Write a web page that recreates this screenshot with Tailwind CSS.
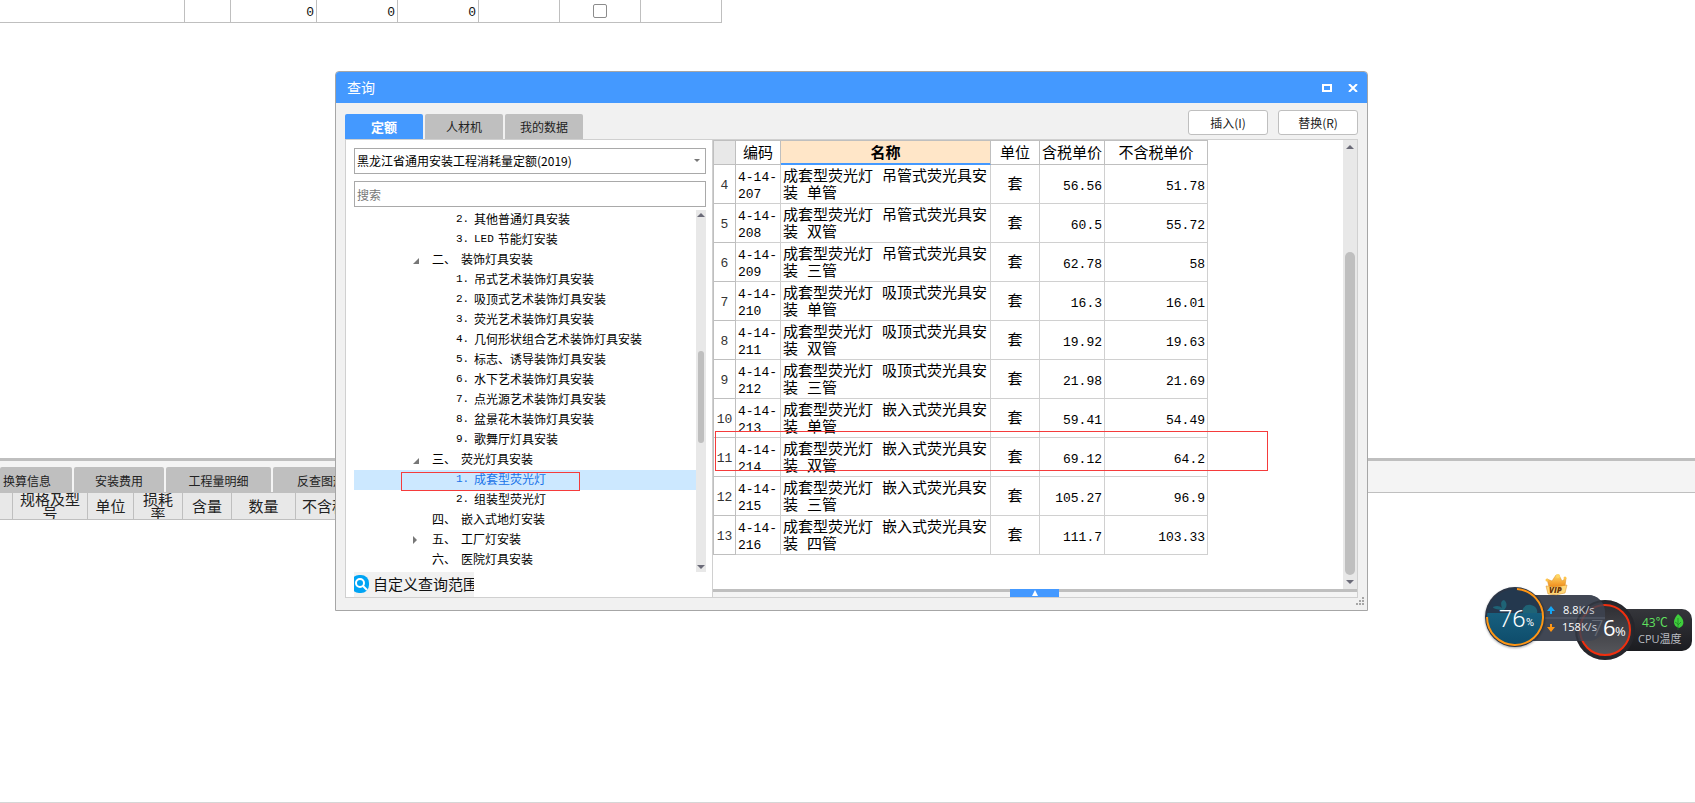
<!DOCTYPE html>
<html lang="zh-CN">
<head>
<meta charset="utf-8">
<title>查询</title>
<script src="https://cdn.jsdelivr.net/npm/@tailwindcss/browser@4"></script>
</head>
<body class="relative flex min-h-screen flex-col overflow-hidden border-b border-[#d6d6d6] bg-white font-['Noto_Sans_CJK_SC',sans-serif] text-[#111]">

<!-- Main sheet -->
<div class="h-[458px] shrink-0">
  <table class="w-[722px] table-fixed border-separate border-spacing-0 text-right font-['Liberation_Mono',monospace] text-[13px] leading-4 [&_td]:h-[23px] [&_td]:border-r [&_td]:border-b [&_td]:border-[#bfbfbf] [&_td]:p-0 [&_td]:pt-1 [&_td]:pr-[2px]">
    <colgroup><col class="w-[185px]"><col class="w-[46px]"><col class="w-[86px]"><col class="w-[81px]"><col class="w-[81px]"><col class="w-[81px]"><col class="w-[81px]"><col class="w-[81px]"></colgroup>
    <tr><td></td><td></td><td>0</td><td>0</td><td>0</td><td></td>
      <td class="!p-0"><input type="checkbox" aria-label="选择" class="mx-auto block size-[14px] appearance-none rounded-[2px] border border-[#8c8c8c] bg-white"></td><td></td></tr>
  </table>
</div>

<!-- Detail pane -->
<section class="flex flex-1 flex-col">
  <div class="flex h-[35px] items-end gap-[2px] border-t-3 border-b border-t-[#bfbfbf] border-b-[#bfbfbf] bg-[#f4f4f4] text-xs text-[#222] *:h-[25px] *:rounded-t-[2px] *:bg-[#bfbfbf] *:pt-[2px]">
    <button class="w-[72px] pr-[21px] text-right whitespace-nowrap">换算信息</button>
    <button class="w-[90px]">安装费用</button>
    <button class="w-[105px]">工程量明细</button>
    <button class="w-[132px]">反查图形工程量</button>
  </div>
  <div class="flex h-[27px] text-center text-[15px] leading-[14px] text-[#222] *:flex *:items-center *:justify-center *:overflow-hidden *:border-r *:border-b *:border-[#bfbfbf] *:bg-[#e8e8e8]">
    <div class="w-[13px]"></div>
    <div class="w-[75px] px-[6px]">规格及型号</div>
    <div class="w-[46px]">单位</div>
    <div class="w-[49px] px-2">损耗率</div>
    <div class="w-[49px]">含量</div>
    <div class="w-[64px]">数量</div>
    <div class="w-[88px]">不含税单价</div>
  </div>
</section>

<!-- Query window -->
<main class="absolute top-[71px] left-[335px] flex h-[540px] w-[1033px] flex-col rounded-t border border-[#a6a6a6] bg-[#f1f1f1]">
  <header class="flex h-[31px] shrink-0 items-center rounded-t-[3px] bg-[#4499ff] pr-[9px] pl-[11px] text-white">
    <h1 class="flex-1 pb-[2px] text-sm">查询</h1>
    <button aria-label="最大化" class="mr-4"><svg width="10" height="8"><rect x="1" y="1" width="8" height="6" fill="none" stroke="#fff" stroke-width="2"/></svg></button>
    <button aria-label="关闭"><svg width="10" height="8"><path d="M1 0L9 8M9 0L1 8" stroke="#fff" stroke-width="2"/></svg></button>
  </header>

  <div class="flex h-9 shrink-0 items-end px-[9px] text-xs">
    <div class="flex flex-1 gap-[2px] *:h-[25px] *:w-[78px] *:rounded-t-[2px]">
      <button class="bg-[#4499ff] text-[13px] font-bold text-white">定额</button>
      <button class="bg-[#bfbfbf] text-[#222]">人材机</button>
      <button class="bg-[#bfbfbf] text-[#222]">我的数据</button>
    </div>
    <div class="mb-1 flex gap-[10px]">
      <button class="h-[25px] w-20 rounded-[3px] border border-[#bfbfbf] bg-white text-[#222]">插入(I)</button>
      <button class="h-[25px] w-20 rounded-[3px] border border-[#bfbfbf] bg-white text-[#222]">替换(R)</button>
    </div>
  </div>

  <div class="mx-[9px] mb-3 flex min-h-0 flex-1 border border-[#d0d0d0] bg-white">
    <!-- Catalogue -->
    <aside class="flex w-[367px] flex-col border-r border-[#d0d0d0] pt-2 pr-[6px] pl-2 text-xs text-black">
      <div class="relative mb-[7px]">
        <select aria-label="定额库" class="block h-[26px] w-full appearance-none border border-[#a9a9a9] bg-white pl-[2px] text-xs"><option>黑龙江省通用安装工程消耗量定额(2019)</option></select>
        <svg class="pointer-events-none absolute top-[11px] right-[5px]" width="7" height="4"><path d="M0 0h6L3 3z" fill="#777"/></svg>
      </div>
      <input type="text" aria-label="搜索" placeholder="搜索" class="mb-[3px] block h-[26px] w-full border border-[#a9a9a9] pl-[2px] text-xs placeholder:text-[#777]">
      <div class="flex min-h-0 flex-1">
        <ul class="flex-1 [&_b]:w-[18px] [&_b]:font-['Liberation_Mono',monospace] [&_b]:text-[11px] [&_b]:font-normal [&_i]:w-[29px] [&_i]:not-italic [&_li]:flex [&_li]:h-5 [&_li]:items-center [&_li]:pb-[2px] [&_li]:whitespace-nowrap">
          <li class="pl-[102px]"><b>2.</b>其他普通灯具安装</li>
          <li class="pl-[102px]"><b>3.</b><span class="mr-1 font-['Liberation_Mono',monospace] text-[11px]">LED</span>节能灯安装</li>
          <li class="pl-[59px]"><svg class="mt-1 mr-[13px]" width="6" height="6"><path d="M6 0v6H0z" fill="#777"/></svg><i>二、</i>装饰灯具安装</li>
          <li class="pl-[102px]"><b>1.</b>吊式艺术装饰灯具安装</li>
          <li class="pl-[102px]"><b>2.</b>吸顶式艺术装饰灯具安装</li>
          <li class="pl-[102px]"><b>3.</b>荧光艺术装饰灯具安装</li>
          <li class="pl-[102px]"><b>4.</b>几何形状组合艺术装饰灯具安装</li>
          <li class="pl-[102px]"><b>5.</b>标志、诱导装饰灯具安装</li>
          <li class="pl-[102px]"><b>6.</b>水下艺术装饰灯具安装</li>
          <li class="pl-[102px]"><b>7.</b>点光源艺术装饰灯具安装</li>
          <li class="pl-[102px]"><b>8.</b>盆景花木装饰灯具安装</li>
          <li class="pl-[102px]"><b>9.</b>歌舞厅灯具安装</li>
          <li class="pl-[59px]"><svg class="mt-1 mr-[13px]" width="6" height="6"><path d="M6 0v6H0z" fill="#777"/></svg><i>三、</i>荧光灯具安装</li>
          <li class="relative bg-[#cce8ff] pl-[102px] text-[#1a73e8]"><b>1.</b>成套型荧光灯<span class="absolute top-[2px] left-[47px] h-[19px] w-[179px] border border-[#f53b3b]"></span></li>
          <li class="pl-[102px]"><b>2.</b>组装型荧光灯</li>
          <li class="pl-[78px]"><i>四、</i>嵌入式地灯安装</li>
          <li class="pl-[59px]"><svg class="mt-[2px] mr-[15px]" width="4" height="8"><path d="M0 0l4 4-4 4z" fill="#777"/></svg><i>五、</i>工厂灯安装</li>
          <li class="pl-[78px]"><i>六、</i>医院灯具安装</li>
        </ul>
        <div class="flex w-[10px] flex-col items-center bg-[#e8e8e8] py-[3px]">
          <svg width="8" height="4"><path d="M4 0l4 4H0z" fill="#6b6b78"/></svg>
          <div class="mt-[134px] h-[92px] w-[6px] rounded-full bg-[#bfbfbf]"></div>
          <svg class="mt-auto" width="8" height="4"><path d="M0 0h8L4 4z" fill="#6b6b78"/></svg>
        </div>
      </div>
      <button class="flex h-[25px] w-[120px] items-center gap-1 overflow-hidden bg-[#f1f1f1] pb-[2px] text-[15px] whitespace-nowrap text-[#111]">
        <svg class="shrink-0" width="15" height="18" viewBox="0 0 15 18"><rect x="-3" y="0" width="18" height="18" rx="8" fill="#00a4f4"/><circle cx="6" cy="8" r="4" fill="none" stroke="#fff" stroke-width="2"/><path d="M9 11l4 4" stroke="#fff" stroke-width="2"/></svg>自定义查询范围</button>
    </aside>

    <!-- Results -->
    <section class="flex min-w-0 flex-1 flex-col">
      <div class="flex min-h-0 flex-1">
        <div class="relative flex-1">
          <table class="w-[495px] table-fixed border-separate border-spacing-0 text-[15px] leading-[17px] text-black [&_td]:h-[39px] [&_td]:border-r [&_td]:border-b [&_td]:border-[#d0d0d0] [&_td]:p-0 [&_td]:pt-[3px] [&_td:nth-child(1)]:border-l [&_td:nth-child(1)]:border-[#bfbfbf] [&_td:nth-child(1)]:text-center [&_td:nth-child(1)]:text-[#333] [&_td:nth-child(n+5)]:pt-1 [&_td:nth-child(n+5)]:pr-[2px] [&_td:nth-child(n+5)]:text-right [&_td:nth-child(2)]:pl-[2px] [&_td:nth-child(3)]:pl-[2px] [&_td:nth-child(3)]:text-[15px] [&_td:nth-child(3)]:whitespace-nowrap [&_td:nth-child(4)]:text-center [&_td:nth-child(4)]:text-[15px] [&_td]:font-['Liberation_Mono','Noto_Sans_CJK_SC',monospace] [&_td]:text-[13px] [&_th]:h-[25px] [&_th]:border-t [&_th]:border-r [&_th]:border-b [&_th]:border-[#bfbfbf] [&_th]:p-0 [&_th]:pb-[2px] [&_th]:font-normal [&_th]:whitespace-nowrap">
            <colgroup><col class="w-[23px]"><col class="w-[45px]"><col class="w-[210px]"><col class="w-[49px]"><col class="w-[65px]"><col class="w-[103px]"></colgroup>
            <thead><tr><th class="border-l bg-[#e8e8e8]"></th><th>编码</th><th class="!border-b-[#4499ff] bg-[#ffe6c8] shadow-[inset_0_-1px_0_#4499ff]"><strong>名称</strong></th><th>单位</th><th>含税单价</th><th>不含税单价</th></tr></thead>
            <tbody>
              <tr><td>4</td><td>4-14-<br>207</td><td>成套型荧光灯 吊管式荧光具安<br>装 单管</td><td>套</td><td>56.56</td><td>51.78</td></tr>
              <tr><td>5</td><td>4-14-<br>208</td><td>成套型荧光灯 吊管式荧光具安<br>装 双管</td><td>套</td><td>60.5</td><td>55.72</td></tr>
              <tr><td>6</td><td>4-14-<br>209</td><td>成套型荧光灯 吊管式荧光具安<br>装 三管</td><td>套</td><td>62.78</td><td>58</td></tr>
              <tr><td>7</td><td>4-14-<br>210</td><td>成套型荧光灯 吸顶式荧光具安<br>装 单管</td><td>套</td><td>16.3</td><td>16.01</td></tr>
              <tr><td>8</td><td>4-14-<br>211</td><td>成套型荧光灯 吸顶式荧光具安<br>装 双管</td><td>套</td><td>19.92</td><td>19.63</td></tr>
              <tr><td>9</td><td>4-14-<br>212</td><td>成套型荧光灯 吸顶式荧光具安<br>装 三管</td><td>套</td><td>21.98</td><td>21.69</td></tr>
              <tr><td>10</td><td>4-14-<br>213</td><td>成套型荧光灯 嵌入式荧光具安<br>装 单管</td><td>套</td><td>59.41</td><td>54.49</td></tr>
              <tr><td>11</td><td>4-14-<br>214</td><td>成套型荧光灯 嵌入式荧光具安<br>装 双管</td><td>套</td><td>69.12</td><td>64.2</td></tr>
              <tr><td>12</td><td>4-14-<br>215</td><td>成套型荧光灯 嵌入式荧光具安<br>装 三管</td><td>套</td><td>105.27</td><td>96.9</td></tr>
              <tr><td>13</td><td>4-14-<br>216</td><td>成套型荧光灯 嵌入式荧光具安<br>装 四管</td><td>套</td><td>111.7</td><td>103.33</td></tr>
            </tbody>
          </table>
          <div class="absolute top-[291px] left-[2px] h-10 w-[553px] border border-[#f53b3b]"></div>
        </div>
        <div class="flex w-[14px] flex-col items-center bg-[#e8e8e8] py-[5px]">
          <svg width="8" height="4"><path d="M4 0l4 4H0z" fill="#6b6b78"/></svg>
          <div class="mt-[103px] h-[323px] w-[10px] rounded-full bg-[#bfbfbf]"></div>
          <svg class="mt-auto" width="8" height="4"><path d="M0 0h8L4 4z" fill="#6b6b78"/></svg>
        </div>
      </div>
      <div class="flex h-2 shrink-0 bg-linear-to-b from-[#bfbfbf] from-[3px] to-[#f4f4f4] to-[3px] pl-[297px]">
        <button aria-label="展开" class="flex h-2 w-[49px] items-center justify-center bg-[#4499ff]"><svg width="6" height="6"><path d="M3 0l3 6H0z" fill="#fff"/></svg></button>
      </div>
    </section>
  </div>
  <svg class="absolute right-[2px] bottom-1" width="9" height="9" fill="#a6a6a6"><path d="M6 0h2v2H6zM3 3h2v2H3zM6 3h2v2H6zM0 6h2v2H0zM3 6h2v2H3zM6 6h2v2H6z"/></svg>
</main>

<!-- Floating system monitors -->
<svg class="absolute top-[565px] left-[1470px]" width="225" height="105" viewBox="0 0 225 105" role="img" aria-label="系统监控">
  <defs>
    <linearGradient id="dark" x2="0" y2="1"><stop stop-color="#35363b"/><stop offset="1" stop-color="#1b1c20"/></linearGradient>
    <linearGradient id="disc" x2="0" y2="1"><stop stop-color="#2e2e33"/><stop offset="1" stop-color="#56575c"/></linearGradient>
    <linearGradient id="gold" x2="0" y2="1"><stop stop-color="#ffd765"/><stop offset="1" stop-color="#f08c1c"/></linearGradient>
    <linearGradient id="sea" x2="0" y2="1"><stop stop-color="#175f7e"/><stop offset="1" stop-color="#0d4a69"/></linearGradient>
    <clipPath id="orb"><circle cx="45" cy="52" r="28"/></clipPath>
    <filter id="soft" x="-20%" y="-20%" width="140%" height="150%"><feDropShadow dx="0" dy="1" stdDeviation="1" flood-opacity=".35"/></filter>
  </defs>
  <path d="M145 44h67a10 10 0 0 1 10 10v22a10 10 0 0 1-10 10h-67z" fill="url(#dark)"/>
  <path d="M50 30h68a17 17 0 0 1 17 17v12a17 17 0 0 1-17 17H50z" fill="#4a4f5c"/>
  <circle cx="135" cy="65" r="30" fill="#28292e"/>
  <circle cx="135" cy="65" r="25" fill="url(#disc)" stroke="#f02f0f" stroke-width="2"/>
  <text x="121" y="71" font-family="Open Sans" font-size="22" font-weight="300" fill="#fff">7</text>
  <path d="M50 30h68a17 17 0 0 1 17 17v12a17 17 0 0 1-17 17H50z" fill="#3f4553" fill-opacity=".8"/>
  <path d="M74 53h61" stroke="#5d6270"/>
  <circle cx="135" cy="65" r="29" fill="none" stroke="#222329" stroke-opacity=".35" stroke-width="2"/>
  <g filter="url(#soft)"><circle cx="45" cy="52" r="30" fill="#2b3646"/></g>
  <g clip-path="url(#orb)">
    <path d="M15 20h60v28H15z" fill="#24384e"/>
    <path d="M15 48h60v35H15z" fill="url(#sea)"/>
    <path d="M53 48c-2-5 3-9 8-8 5 1 7 5 6 8zM31 45c-3-1-8-1-8-3 4-2 7-1 9 1-1-3-2-7 2-8 4 3 3 8-1 11z" fill="#1f6376"/>
  </g>
  <path d="M47 24a28 28 0 1 1-30 28" fill="none" stroke="#ff9614" stroke-width="2"/>
  <g fill="#fff">
    <text x="29" y="62" font-family="Roboto" font-size="24" font-weight="300">76</text>
    <text x="56" y="61" font-family="Roboto" font-size="11">%</text>
    <text x="93" y="49" font-family="Open Sans" font-size="11">8.8<tspan fill="#cdd1d8">K/s</tspan></text>
    <text x="92" y="66" font-family="Open Sans" font-size="11">158<tspan fill="#cdd1d8">K/s</tspan></text>
    <text x="133" y="71" font-family="Open Sans" font-size="22">6</text>
    <text x="145" y="71" font-family="Open Sans" font-size="13">%</text>
  </g>
  <path d="M81 41l4 5h-3v3h-2v-3h-3z" fill="#14a5f5"/>
  <path d="M81 67l4-5h-3v-3h-2v3h-3z" fill="#ff9614"/>
  <path d="M79 22L77 14l5 2 4-6h3l3 6 4-3-1 9z" fill="url(#gold)" stroke="#d98a20" stroke-width=".5"/>
  <circle cx="88" cy="11" r="2" fill="#ffd765"/><circle cx="77" cy="15" r="1.500" fill="#ffc54a"/><circle cx="95" cy="13" r="1.500" fill="#ffc54a"/>
  <path d="M76 21q10 2 21-1l-2 8q-9 3-17 1z" fill="#ffd778" stroke="#d98a20" stroke-width=".5"/>
  <text x="79" y="28" font-family="Open Sans" font-size="8" font-weight="800" font-style="italic" fill="#6b3205">VIP</text>
  <text x="172" y="62" font-family="Open Sans, Noto Sans CJK SC" font-size="12" fill="#5fe05f">43℃</text>
  <path d="M208 49c7 5 7 12 1 14-7-2-6-9-1-14z" fill="#3fce3c"/><path d="M208 53v12M208 60l3-3M208 59l-3-2" stroke="#1c7a22" stroke-width=".7" fill="none"/>
  <text x="168" y="78" font-family="Open Sans, Noto Sans CJK SC" font-size="11" fill="#b9bcc2">CPU温度</text>
</svg>
</body>
</html>
